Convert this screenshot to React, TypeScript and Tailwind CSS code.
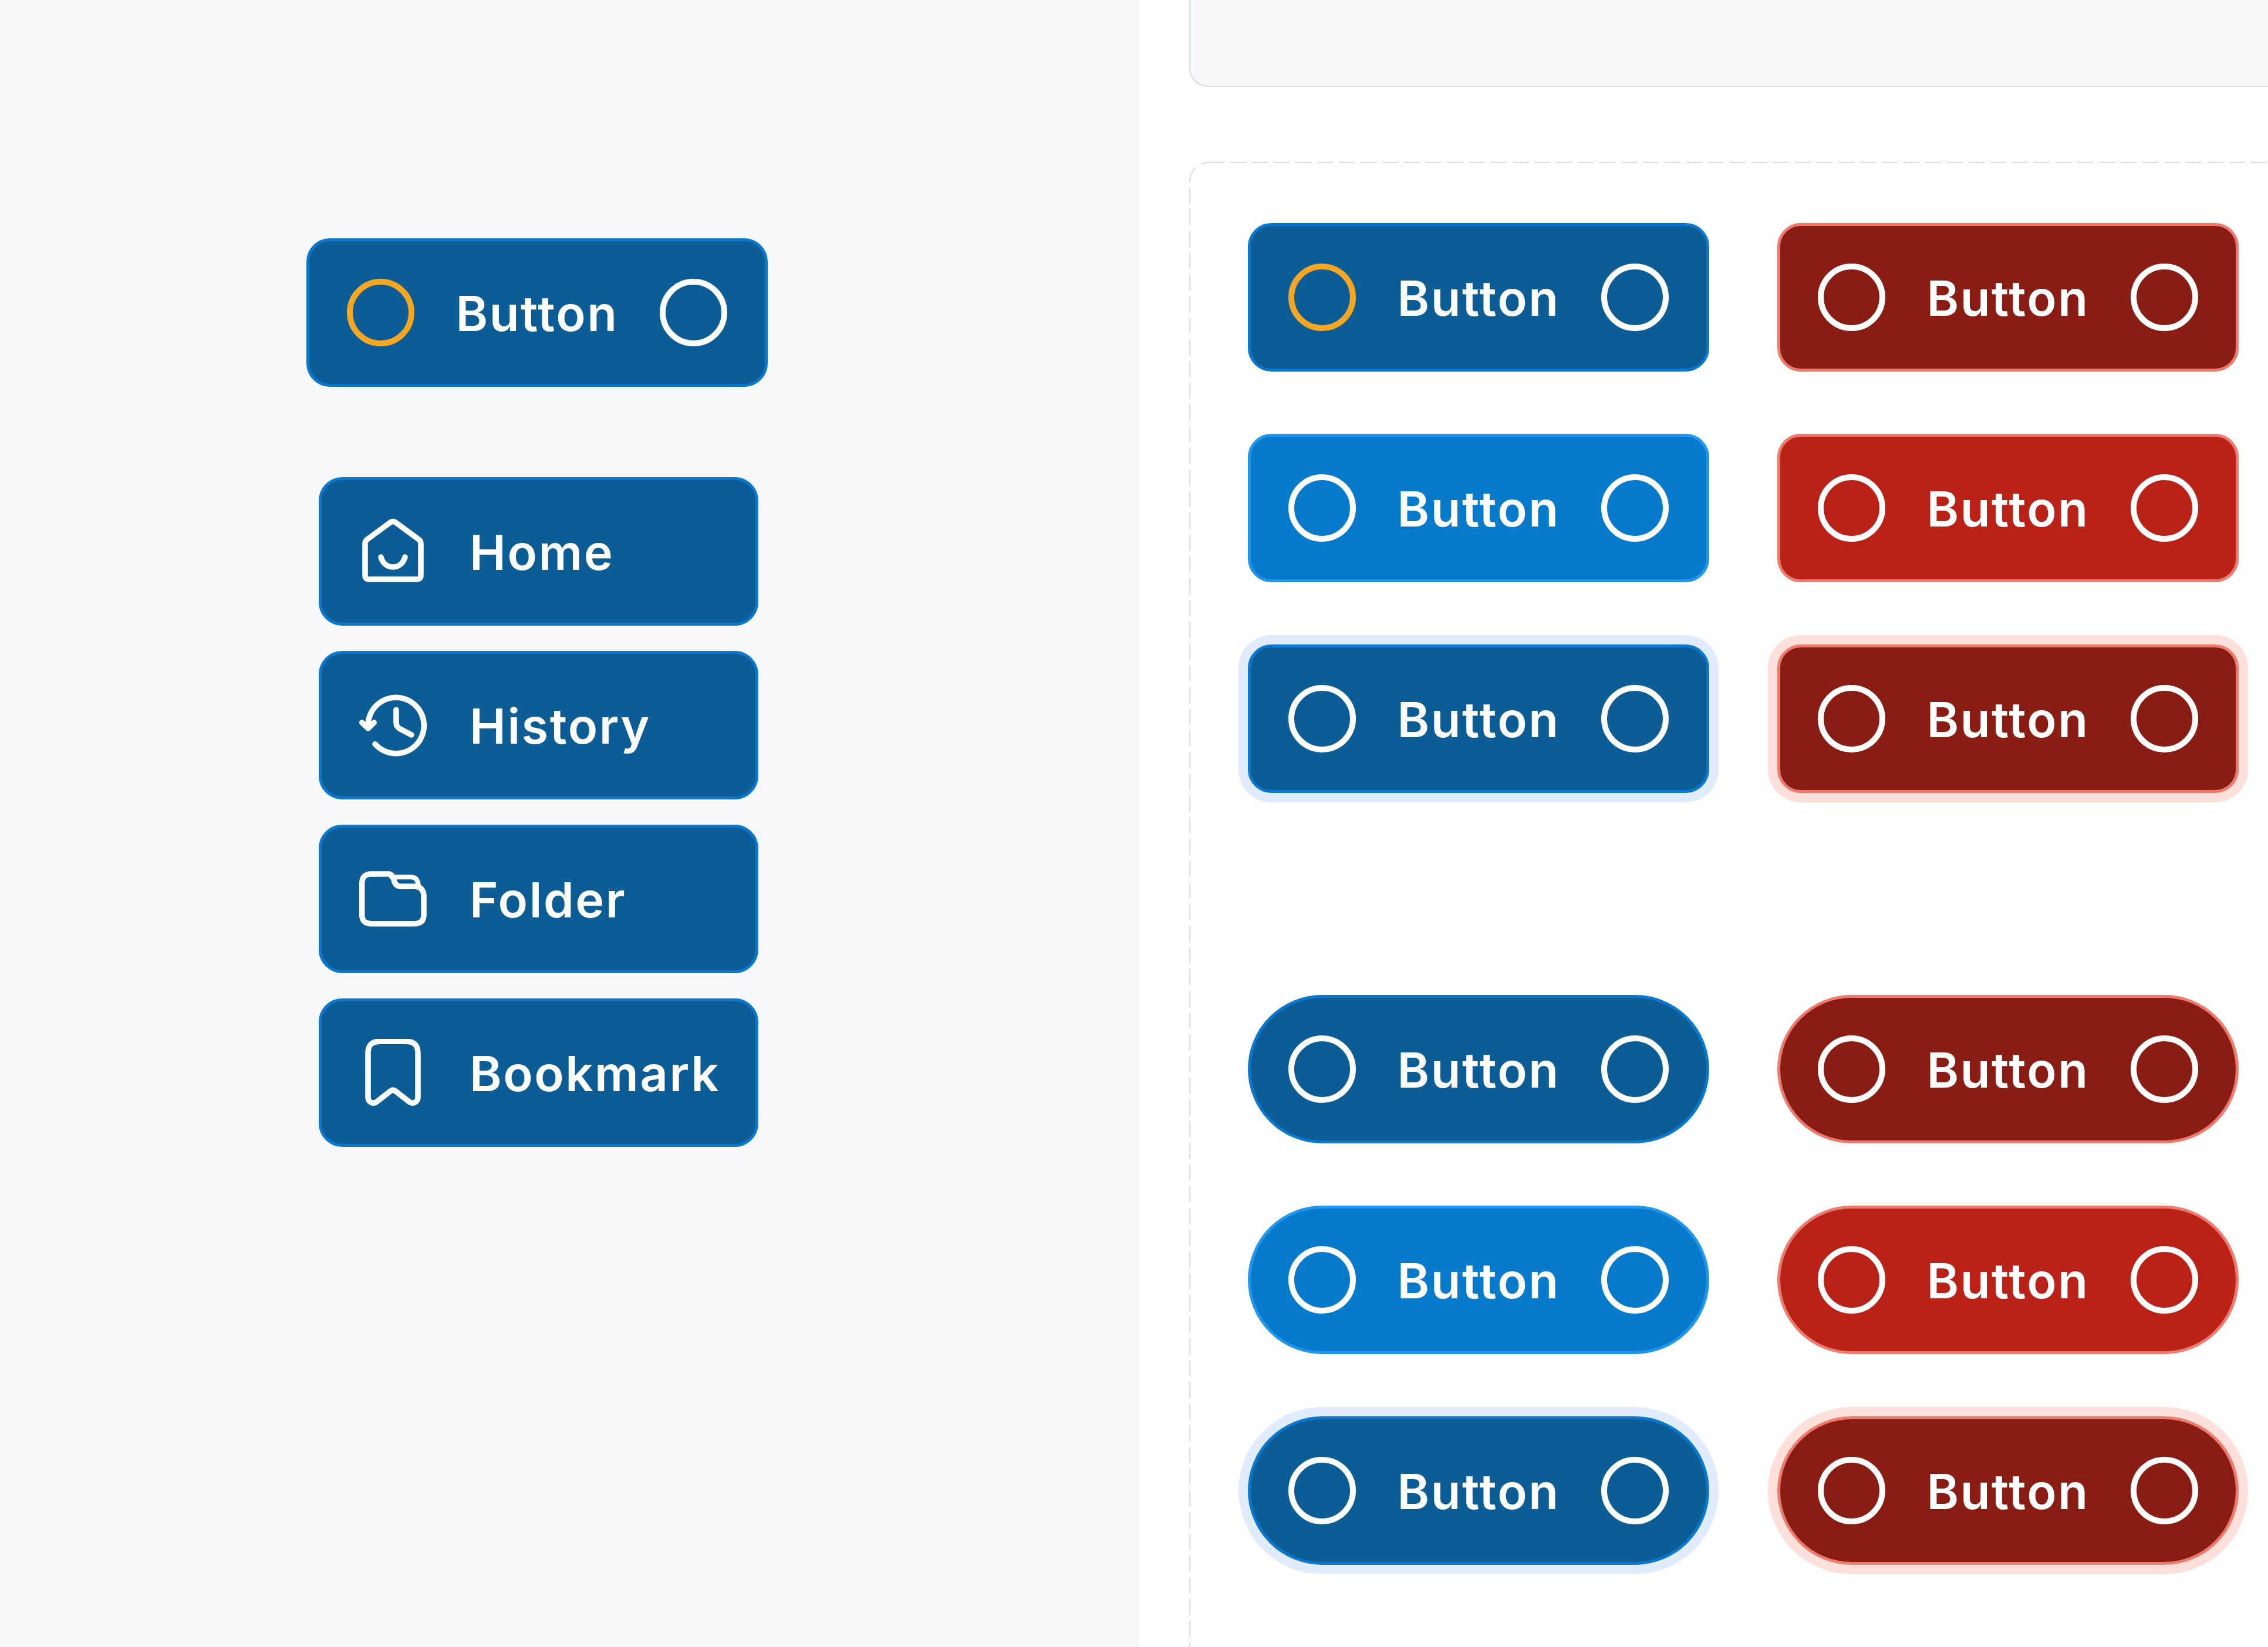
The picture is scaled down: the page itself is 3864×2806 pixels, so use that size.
import React from "react";

const font = { fontFamily: "Inter, 'Noto Sans', sans-serif" };

const Ring = ({ orange }: { orange?: boolean }) => (
  <svg viewBox="0 0 115 115" className="w-[115px] h-[115px] shrink-0" fill="none">
    <circle cx="57.5" cy="57.5" r="52.5" stroke={orange ? "#f5a623" : "#ffffff"} strokeWidth="10" />
  </svg>
);

const Icon = ({ children }: { children: React.ReactNode }) => (
  <svg viewBox="0 0 115 115" className="w-[115px] h-[115px] shrink-0" fill="none" stroke="#ffffff" strokeWidth="9.5" strokeLinecap="round" strokeLinejoin="round">
    {children}
  </svg>
);

const Home = () => (
  <Icon>
    <path d="M10 44Q10 40 13 37.5L53 8Q57.5 5 62 8L102 37.5Q105 40 105 44V98Q105 105 98 105H17Q10 105 10 98Z" />
    <path d="M37 67C40 78 48 84 57.5 84C67 84 75 78 78 67" />
  </Icon>
);
const History = () => (
  <Icon>
    <path d="M27 89.7A47.7 47.7 0 1 0 15 60" />
    <path d="M4.7 53L15.3 63L25.3 53" />
    <path d="M63 31.3V53Q63 60 69 63.5L89 74" />
  </Icon>
);
const Folder = () => (
  <Icon>
    <path d="M4.7 31Q4.7 15 21 15H50Q57 15 59.7 27Q62 36.3 72 36.3H94Q110 36.3 110 54V84.7Q110 99.7 94.7 99.7H21Q4.7 99.7 4.7 84.7Z" />
    <path d="M55 20.3H88Q99 20.3 100.7 33" strokeWidth="8" />
  </Icon>
);
const Bookmark = () => (
  <Icon>
    <path d="M15 24Q15 4.3 35 4.3H80Q100 4.3 100 24V99C100 108 91 112 85 107L62 89Q57.5 85.5 53 89L30 107C24 112 15 108 15 99Z" />
  </Icon>
);

const tones = {
  blueDark: "bg-[#0c5c96] border-[#0a78cf]",
  blue: "bg-[#087acc] border-[#2196ee]",
  blueRing: "bg-[#0c5c96] border-[#0a78cf] shadow-[0_0_0_16px_#e0ebfb]",
  redDark: "bg-[#8a1d13] border-[#ee7a6e]",
  red: "bg-[#ba2218] border-[#ee7a6e]",
  redRing: "bg-[#8a1d13] border-[#ee7a6e] shadow-[0_0_0_16px_#fee0da]",
};

type Tone = keyof typeof tones;

const Label = ({ children }: { children: React.ReactNode }) => (
  <span className="text-white text-[83px] font-semibold tracking-[2.5px] leading-none pt-[4px]" style={font}>{children}</span>
);

const Btn = ({ tone, pill, orange }: { tone: Tone; pill?: boolean; orange?: boolean }) => (
  <div className={`${tones[tone]} ${pill ? "rounded-[127px]" : "rounded-[40px]"} border-[5px] h-[253px] w-[786px] flex items-center justify-between px-[64px]`}>
    <Ring orange={orange} />
    <Label>Button</Label>
    <Ring />
  </div>
);

const Nav = ({ icon, label }: { icon: React.ReactNode; label: string }) => (
  <div className="bg-[#0c5c96] border-[#0a78cf] rounded-[40px] border-[5px] h-[253px] w-[749px] flex items-center gap-[73px] pl-[64px]">
    {icon}
    <Label>{label}</Label>
  </div>
);

export default function App() {
  return (
    <div className="w-[3864px] h-[2806px] flex overflow-hidden bg-white">
      <div className="w-[1942px] shrink-0 bg-[#f7f8fa] pt-[406px]">
        <div className="ml-[522px]">
          <Btn tone="blueDark" orange />
        </div>
        <div className="ml-[543px] mt-[154px] flex flex-col gap-[43px]">
          <Nav icon={<Home />} label="Home" />
          <Nav icon={<History />} label="History" />
          <Nav icon={<Folder />} label="Folder" />
          <Nav icon={<Bookmark />} label="Bookmark" />
        </div>
      </div>
      <div className="pl-[84px] flex flex-col shrink-0">
        <div className="w-[2400px] h-[148px] shrink-0 bg-[#f7f8fa] border-2 border-t-0 border-[#d9dbe3] rounded-bl-[32px]" />
        <div className="relative w-[2400px] h-[2800px] shrink-0 mt-[128px] pl-[100px] pt-[104px]">
          <svg className="absolute left-0 top-0 w-[2400px] h-[2800px]" viewBox="0 0 2400 2800" fill="none">
            <rect x="1" y="1" width="2398" height="2798" rx="32" stroke="#d9dbe3" strokeWidth="2" strokeDasharray="27 10" />
          </svg>
          <div className="relative grid grid-cols-[786px_786px] gap-x-[116px] gap-y-[106px]">
            <Btn tone="blueDark" orange />
            <Btn tone="redDark" />
            <Btn tone="blue" />
            <Btn tone="red" />
            <Btn tone="blueRing" />
            <Btn tone="redRing" />
          </div>
          <div className="relative grid grid-cols-[786px_786px] gap-x-[116px] gap-y-[106px] mt-[344px]">
            <Btn tone="blueDark" pill />
            <Btn tone="redDark" pill />
            <Btn tone="blue" pill />
            <Btn tone="red" pill />
            <Btn tone="blueRing" pill />
            <Btn tone="redRing" pill />
          </div>
        </div>
      </div>
    </div>
  );
}
